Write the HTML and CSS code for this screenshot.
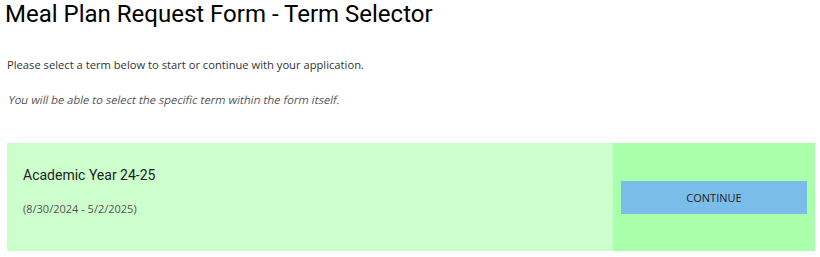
FILE: index.html
```html
<!DOCTYPE html>
<html>
<head>
<meta charset="utf-8">
<link rel="stylesheet" href="styles.css">
</head>
<body>
<h1 class="title">Meal Plan Request Form - Term Selector</h1>
<div class="intro">
  <p class="lead">Please select a term below to start or continue with your application.</p>
  <p class="note"><span class="slant">You will be able to select the specific term within the form itself.</span></p>
</div>
<div class="term">
  <div class="term-info">
    <div class="term-name">Academic Year 24-25</div>
    <div class="term-dates">(8/30/2024 - 5/2/2025)</div>
  </div>
  <div class="term-action">
    <button class="continue">CONTINUE</button>
  </div>
</div>
</body>
</html>
```
FILE: styles.css
```css
html, body {
  margin: 0;
  padding: 0;
  background: #ffffff;
}
body {
  padding: 0 5px 0 5px;
}
.title {
  margin: 0;
  font-family: Roboto, "Liberation Sans", sans-serif;
  font-weight: 400;
  font-size: 24px;
  line-height: 28px;
  color: #000;
}
.intro {
  padding: 29px 2px 0 2px;
  font-family: "Open Sans", "Liberation Sans", sans-serif;
  font-size: 11.2px;
}
.intro p {
  margin: 0;
  line-height: 15px;
}
.lead {
  color: #333;
}
.note {
  margin-top: 20px !important;
  color: #555;
}
.slant {
  display: inline-block;
  transform: skewX(-12deg);
  transform-origin: left bottom;
}
.term {
  margin: 36px 0 0 2px;
  display: flex;
  height: 108px;
}
.term-info {
  flex: 1;
  background: #ccffcc;
  padding: 24px 16px 0 16px;
}
.term-name {
  font-family: Roboto, "Liberation Sans", sans-serif;
  font-size: 14px;
  line-height: 17px;
  color: #222;
}
.term-dates {
  margin-top: 18px;
  font-family: "Open Sans", "Liberation Sans", sans-serif;
  font-size: 11px;
  line-height: 14px;
  color: #555;
}
.term-action {
  width: 186px;
  padding: 0 8px;
  background: #aaffaa;
  display: flex;
  align-items: center;
}
.continue {
  width: 186px;
  height: 33px;
  border: none;
  background: #79bde8;
  font-family: "Open Sans", "Liberation Sans", sans-serif;
  font-size: 11px;
  color: #222;
  padding: 0;
  cursor: pointer;
}
```
